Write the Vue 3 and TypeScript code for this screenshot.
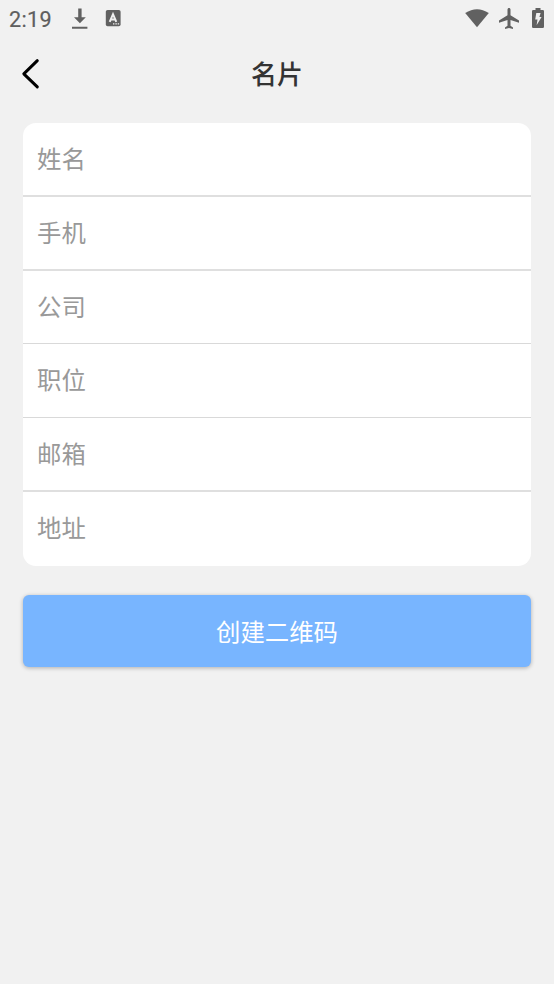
<script setup lang="ts">
import { reactive } from 'vue'

interface Field {
  key: string
  label: string
}

const fields: Field[] = [
  { key: 'name', label: '姓名' },
  { key: 'phone', label: '手机' },
  { key: 'company', label: '公司' },
  { key: 'position', label: '职位' },
  { key: 'email', label: '邮箱' },
  { key: 'address', label: '地址' },
]

const card = reactive<Record<string, string>>({})
</script>

<template>
  <div class="screen">
    <div class="status">
      <span class="time">2:19</span>
      <svg class="download" width="18" height="22" viewBox="0 0 18 22">
        <path d="M7.2 0.5h3.400v8.800h4.200L8.900 15.200 3 9.300h4.200zM1 18.700h15.400v2H1z" />
      </svg>
      <svg class="letter" width="16" height="18" viewBox="0 0 16 18">
        <rect x="0.8" y="1" width="14.800" height="16.200" rx="1.8" />
        <path class="cut-line" d="M4.700 12.800 8 5.200l3.300 7.600M5.900 10.400h4.200" />
        <path class="cut" d="M8 14.200h1.400v1.300H8zM10.400 14.200h1.400v1.300h-1.400zM12.700 14.200h1.400v1.300h-1.400z" />
      </svg>
      <span class="spacer"></span>
      <svg class="wifi" width="24" height="19" viewBox="0 0 24 19">
        <path d="M0.200 4Q12-3.700 23.800 4L12 18.200z" />
      </svg>
      <svg class="plane" width="20" height="21" viewBox="2 2 20 20" preserveAspectRatio="none">
        <path d="M22 16v-2l-8.500-5V3.500C13.500 2.670 12.830 2 12 2s-1.500.670-1.500 1.500V9L2 14v2l8.500-2.500V19L8 20.500V22l4-1 4 1v-1.500L13.500 19v-5.500z" />
      </svg>
      <svg class="battery" width="12" height="20" viewBox="0 0 12 20">
        <path d="M3.500 0h5v2h2.300Q12 2 12 3.300v15.400Q12 20 10.700 20H1.300Q0 20 0 18.700V3.300Q0 2 1.200 2h2.300z" />
        <path class="cut" d="M4.300 5h4.300L7.400 9h2.200l-5 8.300.9-5.800H3.200z" />
      </svg>
    </div>

    <header class="header">
      <button class="back" type="button" aria-label="返回">
        <svg width="20" height="32" viewBox="0 0 20 32">
          <path d="M17.300 2.700 3.800 15.800 17.300 28.900" />
        </svg>
      </button>
      <h1 class="title">名片</h1>
    </header>

    <form class="form" @submit.prevent>
      <div class="card">
        <label v-for="field in fields" :key="field.key" class="row">
          <span v-show="!card[field.key]" class="hint">{{ field.label }}</span>
          <input v-model="card[field.key]" class="input" type="text" />
        </label>
      </div>
      <button class="submit" type="submit">创建二维码</button>
    </form>
  </div>
</template>

<style>
body {
  background: #f1f1f1;
}
</style>

<style scoped>
.screen {
  box-sizing: border-box;
  min-height: 984px;
  background: #f1f1f1;
  font-family: Roboto, "Noto Sans CJK SC", sans-serif;
}
.status {
  display: flex;
  align-items: flex-start;
  box-sizing: border-box;
  height: 38px;
  padding: 8px 10px 0 9px;
  color: #5f5f5f;
}
.status svg {
  display: block;
  flex: none;
  fill: #616161;
}
.status .cut {
  fill: #f1f1f1;
}
.status .cut-line {
  fill: none;
  stroke: #f1f1f1;
  stroke-width: 2;
}
.time {
  width: 62px;
  font-size: 21.600px;
  line-height: 23px;
  font-weight: 400;
  letter-spacing: 0.300px;
  -webkit-text-stroke: 0.200px #5f5f5f;
}
.letter {
  margin: 1px 0 0 16px;
}
.spacer {
  flex: 1;
}
.wifi {
  margin-top: 1px;
}
.plane {
  margin-left: 10px;
}
.battery {
  margin-left: 13px;
}
.header {
  display: grid;
  grid-template-columns: 60px 1fr 60px;
  align-items: center;
  height: 72px;
}
.back {
  display: block;
  padding: 0 0 0 20px;
  border: 0;
  background: none;
}
.back svg {
  display: block;
  fill: none;
  stroke: #000;
  stroke-width: 3;
  stroke-linecap: round;
  stroke-linejoin: round;
}
.title {
  margin: 0;
  padding-top: 2px;
  text-align: center;
  font-size: 26px;
  line-height: 38px;
  font-weight: 500;
  color: #333;
}
.form {
  padding: 13px 23px 0;
}
.card {
  display: grid;
  grid-template-rows: 74px 74px 73px 74px 74px 74px;
  overflow: hidden;
  border-radius: 13px;
  background: #fff;
}
.row {
  display: flex;
  align-items: flex-start;
  box-sizing: border-box;
  padding: 19px 14px 0;
  border-bottom: 2px solid #dfdfdf;
}
.row:nth-child(3),
.row:nth-child(4) {
  border-bottom: 1px solid #d9d9d9;
}
.row:last-child {
  border-bottom: 0;
}
.hint {
  font-size: 24.400px;
  line-height: 36px;
  color: #999;
}
.input {
  flex: 1;
  min-width: 0;
  height: 36px;
  padding: 0;
  border: 0;
  outline: 0;
  background: none;
  font: inherit;
  font-size: 24.400px;
  color: #333;
}
.submit {
  display: block;
  width: 100%;
  height: 72px;
  margin-top: 29px;
  padding: 3px 0 0;
  border: 0;
  border-radius: 6px;
  background: #78b5ff;
  box-shadow: 0 1px 4px rgba(0, 0, 0, 0.28);
  font-family: inherit;
  font-size: 24.400px;
  line-height: 36px;
  color: #fff;
}
</style>
